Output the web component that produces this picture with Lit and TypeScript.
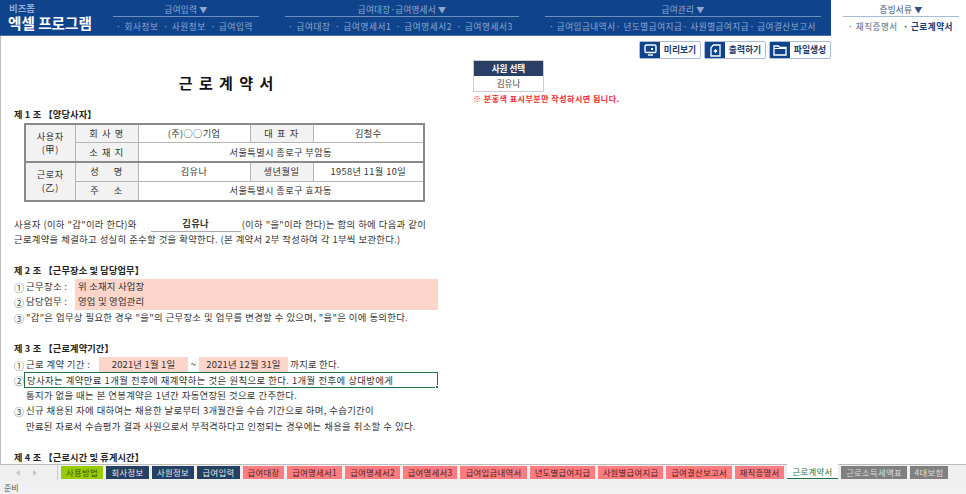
import { LitElement, html, css } from "lit";
import { customElement } from "lit/decorators.js";

const TABS: [string, string, number][] = [
  ["사용방법", "lime", 42], ["회사정보", "navy", 43], ["사원정보", "navy", 42], ["급여입력", "navy", 43],
  ["급여대장", "red", 41], ["급여명세서1", "red", 55], ["급여명세서2", "red", 55], ["급여명세서3", "red", 54],
  ["급여입금내역서", "red", 67], ["년도별급여지급", "red", 65], ["사원별급여지급", "red", 65], ["급여결산보고서", "red", 66],
  ["재직증명서", "red", 49], ["근로계약서", "on", 51], ["근로소득세액표", "grey", 66], ["4대보험", "grey", 38],
];

@customElement("app-root")
export class AppRoot extends LitElement {
  static styles = css`
    :host { display: flex; flex-direction: column; width: 966px; height: 494px; overflow: hidden; background: #fff;
      font-family: "Noto Sans CJK KR", "Noto Sans", sans-serif; font-size: 9.4px; color: #333; }
    .top { display: flex; height: 36px; flex: none; }
    .hdr { width: 831px; background: #0f448d; display: flex; border-bottom: 1px solid #4a72a8; box-sizing: border-box; }
    .brand { width: 113px; padding: 3px 0 0 8px; box-sizing: border-box; flex: none; }
    .biz { font-size: 9.4px; font-weight: 700; color: #8fb0de; line-height: 10px; padding-left: 1px; }
    .prog { font-size: 14.6px; font-weight: 700; color: #fff; line-height: 19px; white-space: nowrap; }
    .grp { flex: none; color: #8fa8cf; font-size: 8.6px; }
    .g1 { width: 146px; margin-right: 26px; }
    .g2 { width: 234px; margin-right: 26px; }
    .g3 { width: 276px; }
    .gt { height: 16px; line-height: 18px; text-align: center; border-bottom: 1.5px solid #6e8fbe; letter-spacing: .2px; }
    .gt b { font-size: 8px; }
    .subs { display: flex; justify-content: space-between; padding: 2px 6px 0 3px; line-height: 15px; white-space: nowrap; letter-spacing: .6px; word-spacing: .5px; }
    .g3 .subs { padding: 2px 5px 0 4px; letter-spacing: .5px; word-spacing: 0; }
    .side { margin-left: 12px; width: 116px; color: #334f7c; font-size: 8.6px; }
    .side .gt { border-color: #a9bcd9; }
    .side .subs { padding: 2px 6px 0 5px; color: #4c6384; letter-spacing: .5px; word-spacing: 0; }
    .side .subs strong { color: #163a70; }

    .main { flex: 1; min-height: 0; display: flex; border-left: 1px solid #bbb; overflow: hidden; }
    .doc { width: 472px; flex: none; padding-left: 13px; box-sizing: border-box; line-height: 15.6px; }
    h1 { margin: 37px 0 14px; width: 425px; text-align: center; font-size: 15px; line-height: 20px; font-weight: 700; color: #111; letter-spacing: 1px; word-spacing: 1px; }
    h2 { margin: 0; font-size: 9.2px; font-weight: 700; line-height: 15.6px; height: 15.6px; color: #222; white-space: nowrap; letter-spacing: .15px; }
    table { margin: 0 0 15px 10px; width: 401px; height: 79px; border-collapse: collapse; table-layout: fixed; border: 2px solid #8a8a8a; }
    td { border: 1px solid #b5b5b5; text-align: center; padding: 0; line-height: 13px; font-size: 9.2px; letter-spacing: .4px; }
    .th { background: #f2f2f2; letter-spacing: .6px; word-spacing: 1px; }
    .sep td { border-top: 2px solid #8a8a8a; }
    .line { height: 15.6px; white-space: nowrap; display: flex; align-items: center; letter-spacing: .2px; }
    .line.plain { letter-spacing: .28px; word-spacing: .4px; }
    .name { width: 90px; text-align: center; font-weight: 700; border-bottom: 1px solid #aaa; margin: 0 1px 0 14px; height: 15px; line-height: 15px; }
    .gap { height: 15.4px; }
    .n { width: 12px; flex: none; font-size: 10px; margin-top: 2px; color: #444; }
    .lab { width: 49px; flex: none; letter-spacing: .35px; }
    .lab.long { width: 73px; }
    .fill { background: #fdd5ca; flex: none; height: 100%; line-height: 15.6px; }
    .wide { width: 363px; padding-left: 3px; box-sizing: border-box; letter-spacing: .2px; }
    .date { width: 89px; text-align: center; }
    .tilde { width: 11px; text-align: center; flex: none; }
    .sel { position: relative; width: 414px; margin-left: 10px; height: 16px; padding-left: 2px; box-sizing: border-box; border: 1px solid #217346; line-height: 14px; letter-spacing: .36px; word-spacing: .4px; }
    .sel::after { content: ""; position: absolute; right: -2px; bottom: -2px; width: 4px; height: 4px; background: #217346; border: 1px solid #fff; box-sizing: border-box; }
    .selwrap { display: flex; height: 15.6px; align-items: center; white-space: nowrap; }
    .selwrap .n { width: 0; }
    .ind { padding-left: 12px; }
    .loose { letter-spacing: .7px; word-spacing: 1px; }

    .aside { flex: none; width: 358px; display: flex; flex-direction: column; }
    .btns { display: flex; justify-content: flex-end; gap: 3px; margin-top: 5px; height: 19px; }
    .btn { display: flex; width: 62px; height: 18px; box-sizing: border-box; border: 1px solid #a9bcd9; border-radius: 2px; font-size: 8.8px; font-weight: 700; color: #1c3a68; background: #fff; }
    .btn .ic { width: 20px; background: #0f448d; display: flex; align-items: center; justify-content: center; flex: none; }
    .btn span { flex: 1; text-align: center; line-height: 15px; }
    .pick { width: 71px; box-sizing: border-box; border: 1.5px solid #ccc; text-align: center; font-size: 8.6px; }
    .pick .h { background: #2a3f66; color: #fff; font-weight: 700; line-height: 15px; height: 15px; }
    .pick .v { line-height: 15px; height: 15px; color: #444; }
    .note { margin-top: 1px; color: #f0282d; font-weight: 700; font-size: 8px; line-height: 12px; letter-spacing: .5px; white-space: nowrap; }

    .tabs { height: 17px; flex: none; box-sizing: border-box; border-top: 1px solid #bcbcbc; background: #efefef; display: flex; align-items: flex-start; }
    .nav { width: 58px; flex: none; display: flex; gap: 13px; padding: 5px 0 0 16px; box-sizing: border-box; border-right: 1px solid #ccc; height: 15px; }
    .nav svg { display: block; }
    .tab { flex: none; margin: 1px 0 0 3px; height: 13px; line-height: 12px; text-align: center; font-size: 8.4px; white-space: nowrap; letter-spacing: .25px; }
    .lime { background: #99cc00; color: #3d5200; }
    .navy { background: #244062; color: #e4e9f0; }
    .red { background: #ff7c80; color: #4a2526; }
    .grey { background: #808080; color: #dedede; }
    .on { background: #fff; color: #217346; margin-top: -1px; height: 15px; line-height: 15px; border-bottom: 1.5px solid #217346; box-sizing: border-box; }
    .status { height: 13px; flex: none; background: #f1f1f1; font-size: 8px; line-height: 13px; color: #555; padding-left: 4px; }
  `;

  render() {
    return html`
      <div class="top">
        <div class="hdr">
          <div class="brand"><div class="biz">비즈폼</div><div class="prog">엑셀 프로그램</div></div>
          <div class="grp g1">
            <div class="gt">급여입력 <b>▼</b></div>
            <div class="subs"><span>· 회사정보</span><span>· 사원정보</span><span>· 급여입력</span></div>
          </div>
          <div class="grp g2">
            <div class="gt">급여대장·급여명세서 <b>▼</b></div>
            <div class="subs"><span>· 급여대장</span><span>· 급여명세서1</span><span>· 급여명세서2</span><span>· 급여명세서3</span></div>
          </div>
          <div class="grp g3">
            <div class="gt">급여관리 <b>▼</b></div>
            <div class="subs"><span>· 급여입금내역서</span><span>· 년도별급여지급</span><span>· 사원별급여지급</span><span>· 급여결산보고서</span></div>
          </div>
        </div>
        <div class="grp side">
          <div class="gt">증빙서류 <b>▼</b></div>
          <div class="subs"><span>· 재직증명서</span><strong>· 근로계약서</strong></div>
        </div>
      </div>

      <div class="main">
        <div class="doc">
          <h1>근 로 계 약 서</h1>
          <h2>제 1 조 【양당사자】</h2>
          <table>
            <colgroup><col style="width:50px" /><col style="width:63px" /><col style="width:112px" /><col style="width:63px" /><col /></colgroup>
            <tr><td class="th" rowspan="2">사용자<br />(甲)</td><td class="th">회 사 명</td><td>(주)○○기업</td><td class="th">대 표 자</td><td>김철수</td></tr>
            <tr><td class="th">소 재 지</td><td colspan="3">서울특별시 종로구 부암동</td></tr>
            <tr class="sep"><td class="th" rowspan="2">근로자<br />(乙)</td><td class="th">성 &nbsp;&nbsp; 명</td><td>김유나</td><td class="th">생년월일</td><td>1958년 11월 10일</td></tr>
            <tr><td class="th">주 &nbsp;&nbsp; 소</td><td colspan="3">서울특별시 종로구 효자동</td></tr>
          </table>
          <div class="line plain">사용자 (이하 "갑"이라 한다)와<span class="name">김유나</span>(이하 "을"이라 한다)는 합의 하에 다음과 같이</div>
          <div class="line plain">근로계약을 체결하고 성실히 준수할 것을 확약한다. (본 계약서 2부 작성하여 각 1부씩 보관한다.)</div>
          <div class="gap"></div>

          <h2>제 2 조 【근무장소 및 담당업무】</h2>
          <div class="line"><span class="n">①</span><span class="lab">근무장소 :</span><span class="fill wide">위 소재지 사업장</span></div>
          <div class="line"><span class="n">②</span><span class="lab">담당업무 :</span><span class="fill wide">영업 및 영업관리</span></div>
          <div class="line plain"><span class="n">③</span>"갑"은 업무상 필요한 경우 "을"의 근무장소 및 업무를 변경할 수 있으며, "을"은 이에 동의한다.</div>
          <div class="gap"></div>

          <h2>제 3 조 【근로계약기간】</h2>
          <div class="line"><span class="n">①</span><span class="lab long">근로 계약 기간 :</span><span class="fill date">2021년 1월 1일</span><span class="tilde">~</span><span class="fill date">2021년 12월 31일</span>&nbsp;까지로 한다.</div>
          <div class="selwrap"><span class="n">②</span><div class="sel">당사자는 계약만료 1개월 전후에 재계약하는 것은 원칙으로 한다. 1개월 전후에 상대방에게</div></div>
          <div class="line plain ind loose">통지가 없을 때는 본 연봉계약은 1년간 자동연장된 것으로 간주한다.</div>
          <div class="line plain"><span class="n">③</span>신규 채용된 자에 대하여는 채용한 날로부터 3개월간을 수습 기간으로 하며, 수습기간이</div>
          <div class="line plain ind">만료된 자로서 수습평가 결과 사원으로서 부적격하다고 인정되는 경우에는 채용을 취소할 수 있다.</div>
          <div class="gap"></div>

          <h2>제 4 조 【근로시간 및 휴게시간】</h2>
        </div>

        <div class="aside">
          <div class="btns">
            <div class="btn"><div class="ic"><svg width="13" height="12" viewBox="0 0 13 12"><rect x="1" y="1" width="11" height="7.5" rx="1.2" fill="none" stroke="#fff" stroke-width="1.4"/><rect x="7" y="4" width="2" height="2" fill="#fff"/><path d="M4 11h5" stroke="#fff" stroke-width="1.4"/></svg></div><span>미리보기</span></div>
            <div class="btn"><div class="ic"><svg width="11" height="13" viewBox="0 0 11 13"><path d="M3.5 1H10V12H1V3.5Z" fill="none" stroke="#fff" stroke-width="1.3"/><path d="M5.5 5l2 2-2 2-2-2Z" fill="#fff"/></svg></div><span>출력하기</span></div>
            <div class="btn"><div class="ic"><svg width="14" height="11" viewBox="0 0 14 11"><path d="M1 10V1H5.5L7 2.5H13V10Z" fill="none" stroke="#fff" stroke-width="1.3"/><path d="M1 3.5H13" stroke="#fff"/></svg></div><span>파일생성</span></div>
          </div>
          <div class="pick"><div class="h">사원 선택</div><div class="v">김유나</div></div>
          <div class="note">※ 분홍색 표시부분만 작성하시면 됩니다.</div>
        </div>
      </div>

      <div class="tabs">
        <div class="nav">
          <svg width="4" height="6" viewBox="0 0 4 6"><path d="M4 0V6L0 3Z" fill="#c8c8c8"/></svg>
          <svg width="4" height="6" viewBox="0 0 4 6"><path d="M0 0V6L4 3Z" fill="#c8c8c8"/></svg>
        </div>
        ${TABS.map(([t, c, w]) => html`<div class="tab ${c}" style="width:${w}px">${t}</div>`)}
      </div>
      <div class="status">준비</div>
    `;
  }
}
